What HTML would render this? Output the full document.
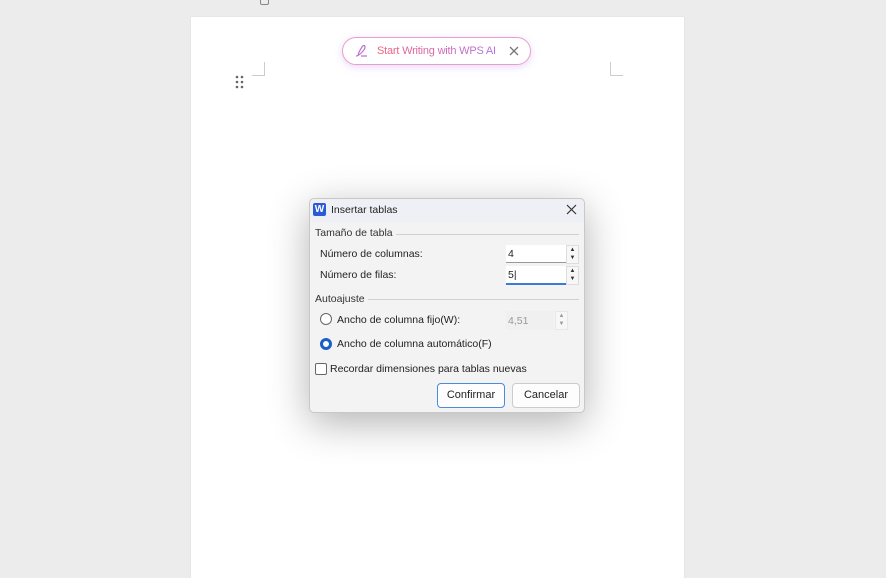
<!DOCTYPE html>
<html><head><style>
body{margin:0;width:886px;height:578px;background:#ececec;position:relative;overflow:hidden;font-family:"Liberation Sans",sans-serif;}
.page{position:absolute;left:191px;top:17px;width:493px;height:561px;background:#fff;box-shadow:0 0 1px #ccc;}
.abs{position:absolute}
.pill{left:342px;top:37px;width:189px;height:28px;border-radius:14px;border:1px solid #e9a0c8;background:#fff;box-shadow:0 2px 8px rgba(190,140,240,.35);box-sizing:border-box}
.pill span{position:absolute;left:34px;top:7px;font-size:11px;letter-spacing:-0.2px;background:linear-gradient(90deg,#f0607a,#b070e0);-webkit-background-clip:text;color:transparent;white-space:nowrap}
.dlg{left:309px;top:198px;width:274px;height:213px;background:#f3f3f3;border:1px solid #c8c8c8;border-radius:5px;box-shadow:0 10px 40px rgba(0,0,0,.3);font-size:10.5px;color:#222}
.t{position:absolute;white-space:nowrap}
.inp{position:absolute;background:#fff;border-bottom:1px solid #999}
.spin{position:absolute;width:11px;height:17px;background:#f7f7f7;border:1px solid #ddd;font-size:6px;line-height:8px;text-align:center;color:#333}
.btn{position:absolute;height:23px;border:1px solid #ccc;border-radius:4px;background:#fdfdfd;text-align:center;line-height:23px;font-size:11px}
.line{position:absolute;height:1px;background:#d0d0d0}
</style></head><body>
<div class="abs" style="left:260px;top:0;width:7px;height:4px;border:1px solid #888;border-top:none;border-radius:0 0 2px 2px"></div>
<div class="page"></div>
<div class="abs" style="left:252px;top:62px;width:12px;height:13px;border-right:1px solid #ccc;border-bottom:1px solid #ccc"></div>
<div class="abs" style="left:610px;top:62px;width:12px;height:13px;border-left:1px solid #ccc;border-bottom:1px solid #ccc"></div>
<svg class="abs" style="left:235px;top:75px" width="9" height="14"><g fill="#666"><circle cx="2" cy="2" r="1.3"/><circle cx="7" cy="2" r="1.3"/><circle cx="2" cy="7" r="1.3"/><circle cx="7" cy="7" r="1.3"/><circle cx="2" cy="12" r="1.3"/><circle cx="7" cy="12" r="1.3"/></g></svg>
<div class="abs pill"><svg class="abs" style="left:11px;top:6px" width="14" height="14"><path d="M2 12 C5 12 11 6 11 3 C11 1 9 1 8 3 C6 6 4 10 4 12 M7 12 H13" stroke="#c070d0" stroke-width="1.2" fill="none"/></svg><span>Start Writing with WPS AI</span><svg class="abs" style="left:166px;top:8px" width="10" height="10"><path d="M1 1L9 9M9 1L1 9" stroke="#777" stroke-width="1.3"/></svg></div>
<div class="abs dlg">
<div class="abs" style="left:0;top:0;width:274px;height:23px;background:#eef0f6;border-radius:5px 5px 0 0"></div>
<div class="abs" style="left:3px;top:4px;width:13px;height:13px;background:#2a5bd7;border-radius:2px;color:#fff;font-weight:bold;font-size:10px;text-align:center;line-height:13px">W</div>
<div class="t" style="left:21px;top:5px">Insertar tablas</div>
<svg class="abs" style="left:256px;top:5px" width="11" height="11"><path d="M1 1L10 10M10 1L1 10" stroke="#333" stroke-width="1.2"/></svg>
<div class="t" style="left:5px;top:28px;color:#333">Tamaño de tabla</div><div class="line" style="left:86px;top:35px;width:183px"></div>
<div class="t" style="left:10px;top:49px">Número de columnas:</div>
<div class="inp" style="left:196px;top:46px;width:60px;height:17px"><span class="t" style="left:2px;top:3px">4</span></div>
<div class="spin" style="left:256px;top:46px">▲<br>▼</div>
<div class="t" style="left:10px;top:70px">Número de filas:</div>
<div class="inp" style="left:196px;top:67px;width:60px;height:17px;border-bottom:2px solid #3b7ad8"><span class="t" style="left:2px;top:3px">5|</span></div>
<div class="spin" style="left:256px;top:67px">▲<br>▼</div>
<div class="t" style="left:5px;top:94px;color:#333">Autoajuste</div><div class="line" style="left:58px;top:100px;width:211px"></div>
<div class="abs" style="left:10px;top:114px;width:10px;height:10px;border:1px solid #666;border-radius:50%;background:#fff"></div>
<div class="t" style="left:27px;top:115px">Ancho de columna fijo(W):</div>
<div class="abs" style="left:196px;top:112px;width:48px;height:19px;background:#f0f0f0;color:#999"><span class="t" style="left:2px;top:4px">4,51</span></div>
<div class="spin" style="left:245px;top:112px;color:#999;border-color:#e8e8e8">▲<br>▼</div>
<div class="abs" style="left:10px;top:139px;width:6px;height:6px;border:3px solid #1a5fc8;border-radius:50%;background:#fff"></div>
<div class="t" style="left:27px;top:139px">Ancho de columna automático(F)</div>
<div class="abs" style="left:5px;top:164px;width:10px;height:10px;border:1px solid #666;border-radius:2px;background:#fff"></div>
<div class="t" style="left:20px;top:164px">Recordar dimensiones para tablas nuevas</div>
<div class="btn" style="left:127px;top:184px;width:66px;border-color:#4a8ae0">Confirmar</div>
<div class="btn" style="left:202px;top:184px;width:66px">Cancelar</div>
</div>
</body></html>
